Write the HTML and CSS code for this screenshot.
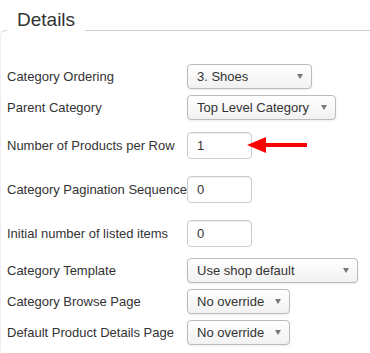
FILE: index.html
```html
<!DOCTYPE html>
<html lang="en">
<head>
    <meta charset="UTF-8">
    <title>Category Details</title>
    <link rel="stylesheet" href="styles.css">
</head>
<body>
    <fieldset class="details">
        <legend>Details</legend>

        <div class="row">
            <label for="ordering">Category Ordering</label>
            <span class="select w-ordering">
                <select id="ordering"><option>3. Shoes</option></select>
            </span>
        </div>
        <div class="row">
            <label for="parent">Parent Category</label>
            <span class="select w-parent">
                <select id="parent"><option>Top Level Category</option></select>
            </span>
        </div>
        <div class="row">
            <label for="perRow">Number of Products per Row</label>
            <input type="text" id="perRow" value="1">
            <!-- annotation pointing at the field -->
            <svg class="pointer" width="62" height="18" viewBox="0 0 62 18">
                <polygon points="0,9 19,1 19,7 60,7 60,11 19,11 19,17" fill="#ff0000"/>
            </svg>
        </div>
        <div class="row">
            <label for="pagination">Category Pagination Sequence</label>
            <input type="text" id="pagination" value="0">
        </div>
        <div class="row">
            <label for="listed">Initial number of listed items</label>
            <input type="text" id="listed" value="0">
        </div>
        <div class="row">
            <label for="template">Category Template</label>
            <span class="select w-template">
                <select id="template"><option>Use shop default</option></select>
            </span>
        </div>
        <div class="row">
            <label for="browse">Category Browse Page</label>
            <span class="select w-override">
                <select id="browse"><option>No override</option></select>
            </span>
        </div>
        <div class="row">
            <label for="productPage">Default Product Details Page</label>
            <span class="select w-override">
                <select id="productPage"><option>No override</option></select>
            </span>
        </div>
    </fieldset>
</body>
</html>
```

FILE: styles.css
```css
html, body {
    margin: 0;
    background: #fff;
}
body {
    font-family: "Liberation Sans", Arial, sans-serif;
    font-size: 13px;
    color: #333;
}
.details {
    margin: 9px 0 0 0;
    padding: 10px 6px 20px 6px;
    border: 1px solid #ccc;
    border-right: none;
    border-left-color: #eeeeee;
    border-bottom-color: #eeeeee;
    border-radius: 6px 0 0 6px;
}
.details legend {
    font-size: 19px;
    line-height: 22px;
    padding: 0 10px 20px 10px;
    color: #333;
}
.row {
    display: flex;
    align-items: center;
    padding: 3px 0;
    position: relative;
}
.row label {
    width: 180px;
    flex: none;
    white-space: nowrap;
}
.row input {
    box-sizing: border-box;
    width: 65px;
    height: 27px;
    margin: 6px 0 5px 0;
    padding: 0 9px;
    font-family: inherit;
    font-size: 13px;
    color: #333;
    border: 1px solid #ccc;
    border-radius: 4px;
    box-shadow: inset 0 1px 1px rgba(0, 0, 0, 0.075);
}
.select {
    position: relative;
    display: inline-block;
}
.select select {
    box-sizing: border-box;
    width: 100%;
    height: 25px;
    padding: 0 20px 0 9px;
    font-family: inherit;
    font-size: 13px;
    color: #333;
    border: 1px solid #bbb;
    border-radius: 4px;
    background: linear-gradient(#ffffff, #f1f1f1);
    box-shadow: 0 1px 2px rgba(0, 0, 0, 0.08);
    -webkit-appearance: none;
    appearance: none;
}
.select::after {
    content: "";
    position: absolute;
    right: 9px;
    top: 10px;
    border-left: 3px solid transparent;
    border-right: 3px solid transparent;
    border-top: 5px solid #777;
    pointer-events: none;
}
.w-ordering { width: 125px; }
.w-parent { width: 149px; }
.w-template { width: 171px; }
.w-override { width: 103px; }
.pointer {
    position: absolute;
    left: 240px;
    top: 13px;
}
```
